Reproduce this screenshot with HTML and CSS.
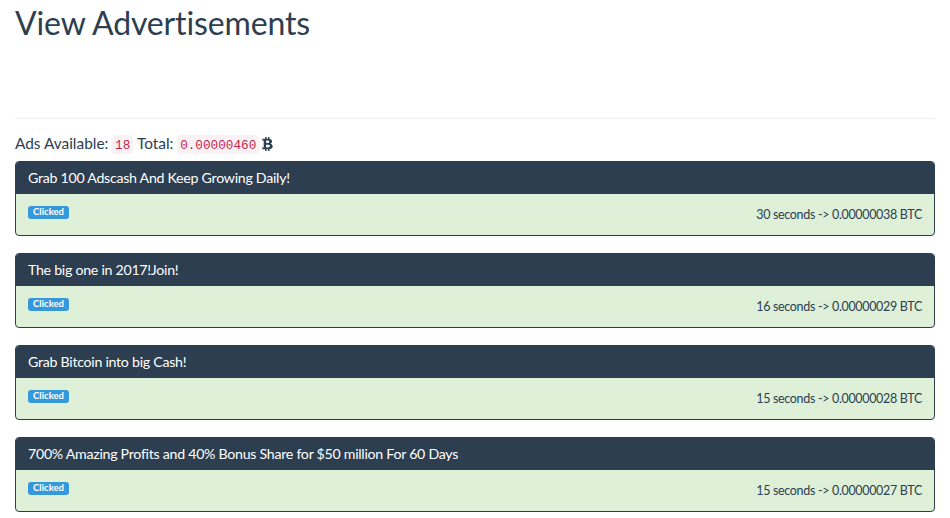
FILE: index.html
```html
<!DOCTYPE html>
<html lang="en">
<head>
    <meta charset="UTF-8">
    <meta name="viewport" content="width=device-width, initial-scale=1.0">
    <title>View Advertisements</title>
    <link rel="stylesheet" href="styles.css">
</head>
<body>
    <div class="container">
        <h1>View Advertisements</h1>
        <hr>
        <div class="summary">
            <span>Ads Available:</span>
            <code>18</code>
            <span>Total:</span>
            <code>0.00000460</code>
            <svg class="btc" viewBox="0 0 11 14" width="11" height="14">
                <path d="M0.3 1.8H6.4C8.8 1.8 10 2.7 10 4.4C10 5.6 9.3 6.4 8.2 6.7C9.8 7 10.7 7.9 10.7 9.3C10.7 11.3 9.2 12.2 6.5 12.2H0.3V10.6H1.7V3.4H0.3ZM4.1 3.5V6.1H5.5C6.7 6.1 7.3 5.7 7.3 4.8C7.3 3.9 6.7 3.5 5.5 3.5ZM4.1 7.7V10.5H5.8C7.2 10.5 7.9 10.1 7.9 9.1C7.9 8.1 7.2 7.7 5.8 7.7Z" fill-rule="evenodd"/>
                <path d="M3.2 0H4.7V2.5H3.2ZM6 0H7.5V2.5H6ZM3.2 11.5H4.7V14H3.2ZM6 11.5H7.5V14H6Z"/>
            </svg>
        </div>

        <div class="panel">
            <div class="panel-heading">Grab 100 Adscash And Keep Growing Daily!</div>
            <div class="panel-body">
                <span class="label">Clicked</span>
                <span class="reward">30 seconds -&gt; 0.00000038 BTC</span>
            </div>
        </div>

        <div class="panel">
            <div class="panel-heading">The big one in 2017!Join!</div>
            <div class="panel-body">
                <span class="label">Clicked</span>
                <span class="reward">16 seconds -&gt; 0.00000029 BTC</span>
            </div>
        </div>

        <div class="panel">
            <div class="panel-heading">Grab Bitcoin into big Cash!</div>
            <div class="panel-body">
                <span class="label">Clicked</span>
                <span class="reward">15 seconds -&gt; 0.00000028 BTC</span>
            </div>
        </div>

        <div class="panel">
            <div class="panel-heading">700% Amazing Profits and 40% Bonus Share for $50 million For 60 Days</div>
            <div class="panel-body">
                <span class="label">Clicked</span>
                <span class="reward">15 seconds -&gt; 0.00000027 BTC</span>
            </div>
        </div>
    </div>
</body>
</html>
```
FILE: styles.css
```css
* {
    box-sizing: border-box;
}

body {
    margin: 0;
    background-color: #fff;
    color: #2c3e50;
    font-family: Lato, "Liberation Sans", sans-serif;
    font-size: 15px;
    line-height: 21px;
    overflow: hidden;
}

.container {
    padding: 0 15px;
}

h1 {
    height: 118px;
    margin: 0;
    padding-top: 5px;
    font-size: 32px;
    font-weight: 400;
    letter-spacing: -0.14px;
    line-height: 36px;
}

hr {
    margin: 0 0 14px;
    border: 0;
    border-top: 1px solid #ecf0f1;
}

.summary {
    display: flex;
    align-items: flex-start;
    gap: 3.7px;
    height: 28px;
    font-size: 15.4px;
    white-space: nowrap;
}

code {
    height: 19px;
    margin-top: 2px;
    padding: 1px 3px 0;
    border-radius: 4px;
    background-color: #f9f2f4;
    color: #c7254e;
    font-family: "Liberation Mono", monospace;
    font-size: 12.7px;
    line-height: 19px;
}

.btc {
    margin: 4px 0 0 -1px;
    fill: #2c3e50;
}

.panel {
    height: 75px;
    margin-bottom: 17px;
    border: 1px solid #2c3e50;
    border-radius: 4px;
    background-color: #dff0d8;
    overflow: hidden;
}

.panel-heading {
    height: 32px;
    padding: 5px 12px;
    background-color: #2c3e50;
    color: #fff;
    font-size: 14.2px;
    letter-spacing: -0.28px;
    line-height: 21px;
}

.panel-body {
    display: flex;
    justify-content: space-between;
    align-items: flex-start;
    padding: 12px;
}

.label {
    height: 13px;
    padding: 0 5px;
    border-radius: 3px;
    background-color: #3498db;
    color: #fff;
    font-size: 9.5px;
    font-weight: 700;
    line-height: 12px;
}

.reward {
    font-size: 12.5px;
    letter-spacing: -0.33px;
    line-height: 18px;
}
```
